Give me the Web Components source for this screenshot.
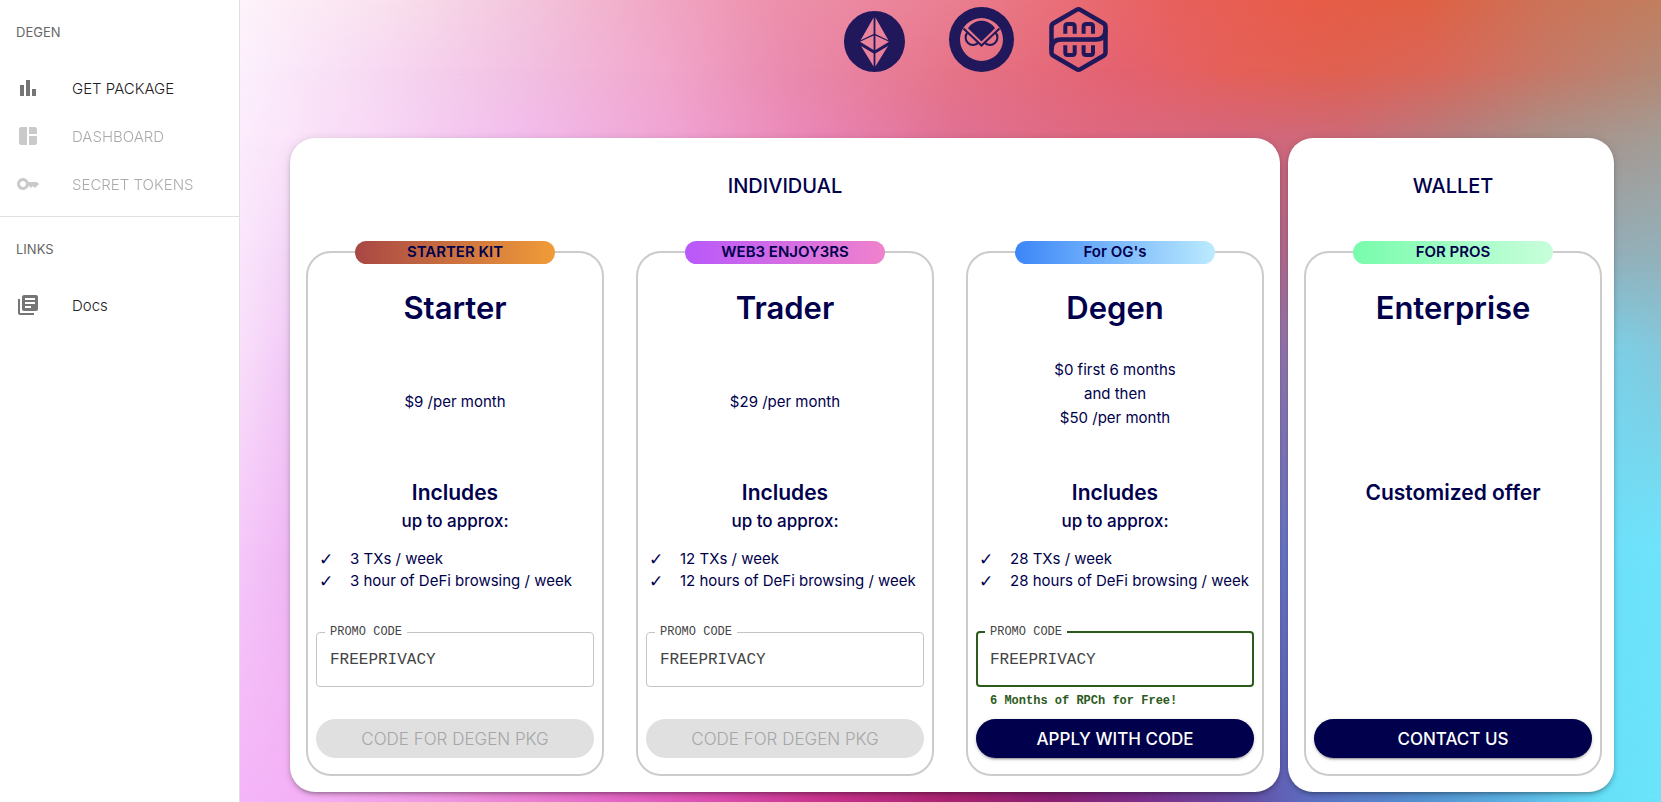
<!DOCTYPE html>
<html lang="en">
<head>
<meta charset="utf-8">
<title>Degen packages</title>
<style>
  html, body { margin: 0; }
  body {
    --navy: #00004c;
    font-family: Inter, "Open Sans", sans-serif;
    color: var(--navy);
    background: #fff;
  }
</style>
</head>
<body>
<degen-app></degen-app>

<script>
const define = (name, html, setup) => {
  const template = document.createElement('template');
  template.innerHTML = html;
  customElements.define(name, class extends HTMLElement {
    connectedCallback() {
      if (this.shadowRoot) return;
      const root = this.attachShadow({ mode: 'open' });
      root.append(template.content.cloneNode(true));
      if (setup) setup(root, this);
    }
  });
};

const ICONS = {
  bars: 'M4 9h4v11H4zm12 4h4v7h-4zm-6-9h4v16h-4z',
  dashboard: 'M11 21H5c-1.1 0-2-.9-2-2V5c0-1.1.9-2 2-2h6v18zm2 0h6c1.1 0 2-.9 2-2v-7h-8v9zm8-11V5c0-1.1-.9-2-2-2h-6v7h8z',
  key: 'M21 10h-8.350C11.830 7.670 9.610 6 7 6c-3.310 0-6 2.690-6 6s2.690 6 6 6c2.610 0 4.830-1.670 5.650-4H13l2 2 2-2 2 2 4-4.040L21 10zM7 15c-1.650 0-3-1.350-3-3s1.350-3 3-3 3 1.350 3 3-1.350 3-3 3z',
  docs: 'M4 6H2v14c0 1.100.9 2 2 2h14v-2H4V6zm16-4H8c-1.100 0-2 .9-2 2v12c0 1.100.9 2 2 2h12c1.100 0 2-.9 2-2V4c0-1.100-.9-2-2-2zm-1 9H9V9h10v2zm-4 4H9v-2h6v2zm4-8H9V5h10v2z'
};

/* Colour mesh: each row is a horizontal ramp, rows fade into one another vertically. */
const MESH = [
  [0, '#fef3fb 0%,#fae2ef 10%,#f3c6dd 20%,#f1a6c3 30%,#ed90ac 38%,#ea7f92 50%,#e96a70 60%,#e8605c 66%,#e85c48 75%,#e06044 83%,#cc7358 92%,#c27e5e'],
  [70, '#fcf0fd 0%,#f7d8f2 10%,#f2c0e2 20%,#f1a6cb 30%,#ea8cb0 38%,#e67488 50%,#e46270 62%,#e56058 70%,#e06050 77%,#da6658 84%,#c67866 92%,#b48874'],
  [138, '#fcecfc 0%,#f7d6f5 10%,#f2bcec 20%,#f0a4d4 30%,#ea86b6 40%,#e07094 50%,#de6880 60%,#d4667c 70%,#cc6a78 78%,#b47e7e 86%,#a89088 92%,#a49c96'],
  [250, '#fae6fc 0%,#f3d4f7 4%,#e9a0d4 30%,#c07090 70%,#b46c90 74%,#94aeb8 97%,#94b0b8'],
  [350, '#f9dffa 0%,#f3cdf7 3%,#d080c0 40%,#9478b0 74%,#7ccfe6 97%,#84c8dc'],
  [550, '#f5c8f9 0%,#f0baf5 3%,#d060b0 40%,#6a78c8 74%,#6ee0fa 97%,#6ee4fc'],
  [802, '#f4b4f8 0%,#f4b0f4 5%,#ee94de 15%,#e56cc8 25%,#d84cac 34%,#c8328c 41%,#a8226e 50%,#8a1e70 57%,#7c2c88 63%,#6848a0 70%,#5c6cc0 75%,#5490d0 83%,#5cb4e4 90%,#66e0f8 96%,#6ae4fa']
];
define('mesh-backdrop', `
  <style>
    :host { display: block; position: absolute; inset: 0; overflow: hidden; }
    div { position: absolute; inset: 0; }
  </style>`, root => {
  const pct = y => (y / 802 * 100).toFixed(1) + '%';
  MESH.forEach(([y, stops], i) => {
    const row = document.createElement('div');
    row.style.background = `linear-gradient(to right, ${stops} 100%)`;
    if (i) row.style.maskImage = `linear-gradient(to bottom, transparent ${pct(MESH[i - 1][0])}, #000 ${pct(y)})`;
    root.append(row);
  });
});

define('nav-item', `
  <style>
    :host { display: block; }
    a { display: flex; align-items: center; gap: 32px; height: 48px; padding: 0 16px; color: #212121; text-decoration: none; font-size: 15px; font-weight: 300; }
    svg { width: 24px; height: 24px; fill: #757575; flex: none; }
    :host([disabled]) a { opacity: .38; pointer-events: none; }
  </style>
  <a href="#"><svg viewBox="0 0 24 24" aria-hidden="true"><path/></svg><span><slot></slot></span></a>`,
(root, host) => {
  root.querySelector('path').setAttribute('d', ICONS[host.getAttribute('icon')]);
  if (host.hasAttribute('disabled')) root.querySelector('a').setAttribute('aria-disabled', 'true');
});

define('nav-section', `
  <style>
    :host { display: block; padding: 8px 0; }
    h2 { margin: 0 0 8px; padding: 0 16px; font-size: 13px; line-height: 48px; font-weight: 400; color: #666; }
  </style>
  <h2></h2><slot></slot>`,
(root, host) => { root.querySelector('h2').textContent = host.getAttribute('label'); });

define('side-nav', `
  <style>
    :host { display: block; background: #fff; border-right: 1px solid #e0e0e0; }
    hr { margin: 0; border: 0; border-top: 1px solid #e0e0e0; }
  </style>
  <nav>
    <nav-section label="DEGEN">
      <nav-item icon="bars">GET PACKAGE</nav-item>
      <nav-item icon="dashboard" disabled>DASHBOARD</nav-item>
      <nav-item icon="key" disabled>SECRET TOKENS</nav-item>
    </nav-section>
    <hr>
    <nav-section label="LINKS"><nav-item icon="docs">Docs</nav-item></nav-section>
  </nav>`);

define('chain-logos', `
  <style>
    :host { display: flex; justify-content: center; gap: 35px; padding: 7px 0 66px 48px; color: #20185a; }
    svg { height: 65px; fill: currentColor; }
  </style>
  <svg width="70" viewBox="0 0 70 65" role="img" aria-label="Ethereum">
    <path fill-rule="evenodd" d="M30.500 4a30.500 30.500 0 1 1 0 61 30.500 30.500 0 1 1 0-61z
      M29.600 10.500V27L16.600 33.200z M31.400 10.500V27L44.400 33.200z
      M29.600 28.600V43L16 34.800z M31.400 28.600V43L45 34.800z
      M29.600 46.600V59.500L17 39z M31.400 46.600V59.500L44 39z"/>
  </svg>
  <svg width="65" viewBox="0 0 65 65" role="img" aria-label="Gnosis">
    <path fill-rule="evenodd" d="M32.500 0a32.500 32.500 0 1 1 0 65 32.500 32.500 0 1 1 0-65z M32.500 11a21.500 21.500 0 1 0 0 43 21.500 21.500 0 1 0 0-43z"/>
    <path d="M19 21.200C25.500 11.200 39.500 11.200 46 21.200L32.500 34.500z"/>
    <g fill="none" stroke="currentColor" stroke-width="2">
      <path d="M14.500 21.500L32.500 38.500L50.500 21.500"/>
      <path d="M18.500 25.500A6.300 6.300 0 1 0 29.500 35.500"/>
      <path d="M46.500 25.500A6.300 6.300 0 1 1 35.500 35.500"/>
    </g>
  </svg>
  <svg width="59" viewBox="0 0 59 65" role="img" aria-label="Hexagonal chain">
    <g fill="none" stroke="currentColor" stroke-width="4.500" stroke-linejoin="round">
      <path d="M27.500 2.900Q29.500 1.800 31.500 2.900L54.500 16.300Q56.500 17.500 56.500 19.800V45.200Q56.500 47.500 54.500 48.700L31.500 62.100Q29.500 63.200 27.500 62.100L4.500 48.700Q2.500 47.500 2.500 45.200V19.800Q2.500 17.500 4.500 16.300z"/>
      <path d="M2.500 42.500Q2.500 32.500 12 32.500H47Q56.500 32.500 56.500 22.500"/>
      <g stroke-width="4">
        <path d="M16.300 26.700V19.500Q16.300 17 18.800 17H23.200Q25.700 17 25.700 19.500V26.700"/>
        <path d="M34.600 26.700V19.500Q34.600 17 37.100 17H41.500Q44 17 44 19.500V26.700"/>
        <path d="M16.300 38.300V45.500Q16.300 48 18.800 48H23.200Q25.700 48 25.700 45.500V38.300"/>
        <path d="M34.600 38.300V45.500Q34.600 48 37.100 48H41.500Q44 48 44 45.500V38.300"/>
      </g>
    </g>
  </svg>`);

define('promo-field', `
  <style>
    :host { display: block; text-align: left; font-family: "Liberation Mono", monospace; }
    fieldset { margin: 0; min-width: 0; padding: 0 8px 6px; border: 1px solid #c4c4c4; border-radius: 4px; }
    legend { padding: 0 5px; font-size: 12px; line-height: 16px; color: #444; }
    input { display: block; box-sizing: border-box; width: 100%; height: 40px; padding: 0 5px; border: 0; outline: 0; background: none; font: 16px "Liberation Mono", monospace; color: #444; }
    p { margin: 0; padding: 0 14px; height: 32px; font-size: 12px; line-height: 28px; font-weight: 700; color: #2b5a1c; }
    :host([message]) fieldset { border: 2px solid #2b5a1c; padding: 0 7px 5px; }
  </style>
  <fieldset>
    <legend><label for="code">PROMO CODE</label></legend>
    <input id="code" type="text" value="FREEPRIVACY">
  </fieldset>
  <p></p>`,
(root, host) => { root.querySelector('p').textContent = host.getAttribute('message') || ''; });

define('pill-button', `
  <style>
    :host { display: block; }
    button { display: block; width: 100%; height: 39px; padding: 0; border: 0; border-radius: 20px; font: 500 17px Inter, sans-serif; color: #fff; background: var(--navy); box-shadow: 0 3px 1px -2px rgba(0,0,0,.2), 0 2px 2px rgba(0,0,0,.14), 0 1px 5px rgba(0,0,0,.12); }
    button:disabled { font-weight: 300; color: #a6a6a6; background: #e0e0e0; box-shadow: none; }
  </style>
  <button type="button"><slot></slot></button>`,
(root, host) => { root.querySelector('button').disabled = host.hasAttribute('disabled'); });

define('plan-card', `
  <style>
    :host { position: relative; display: flex; flex-direction: column; box-sizing: border-box; min-width: 0; padding: 35px 8px 16px; border: 2px solid #ccc; border-radius: 25px; text-align: center; }
    .badge { position: absolute; top: -12px; left: 50%; margin-left: -100px; width: 200px; height: 23px; border-radius: 12px; font-size: 15px; line-height: 22px; font-weight: 600; background: linear-gradient(to right, var(--from), var(--to)); }
    h3 { margin: 0; font-size: 31px; line-height: 40px; font-weight: 600; }
    .price { display: flex; flex-direction: column; justify-content: center; height: 132px; font-size: 15px; line-height: 24px; }
    .footer { margin-top: auto; }
  </style>
  <div class="badge"></div>
  <h3></h3>
  <div class="price"><slot name="price"></slot></div>
  <slot></slot>
  <div class="footer"><slot name="action"></slot></div>`,
(root, host) => {
  const badge = root.querySelector('.badge');
  badge.textContent = host.getAttribute('badge');
  badge.style.setProperty('--from', host.getAttribute('from'));
  badge.style.setProperty('--to', host.getAttribute('to'));
  root.querySelector('h3').textContent = host.getAttribute('name');
});

define('plan-includes', `
  <style>
    :host { display: block; margin-top: 19px; }
    h4 { margin: 0; font-size: 21px; line-height: 28px; font-weight: 600; }
    p { margin: 0; font-size: 17px; line-height: 28px; font-weight: 500; }
    ul { margin: 13px 0 32px; padding: 0 0 0 3px; list-style: none; text-align: left; font-size: 15px; line-height: 22px; }
    li { display: grid; grid-template-columns: 31px 1fr; height: 22px; white-space: nowrap; }
    .tick { font-family: "DejaVu Sans", sans-serif; font-size: 17px; }
  </style>
  <h4></h4>`,
(root, host) => {
  root.querySelector('h4').textContent = host.getAttribute('heading');
  if (!host.hasAttribute('features')) return;
  const note = document.createElement('p');
  note.textContent = 'up to approx:';
  const list = document.createElement('ul');
  for (const text of host.getAttribute('features').split('|')) {
    const li = document.createElement('li');
    li.innerHTML = '<span class="tick">✓</span><span></span>';
    li.lastChild.textContent = text;
    list.append(li);
  }
  root.append(note, list);
});

define('plan-panel', `
  <style>
    :host { display: flex; flex-direction: column; min-width: 0; box-sizing: border-box; padding: 32px var(--end, 16px) 16px 16px; background: #fff; border-radius: 25px; box-shadow: 0 3px 3px -2px rgba(0,0,0,.2), 0 3px 4px rgba(0,0,0,.14), 0 1px 8px rgba(0,0,0,.12); }
    h2 { margin: 0 0 49px; text-align: center; font-size: 20px; line-height: 32px; font-weight: 500; }
    .cards { flex: 1; display: grid; grid-auto-flow: column; grid-auto-columns: minmax(0, 1fr); gap: 32px; }
  </style>
  <h2></h2><div class="cards"><slot></slot></div>`,
(root, host) => { root.querySelector('h2').textContent = host.getAttribute('heading'); });

define('degen-app', `
  <style>
    :host { display: grid; grid-template-columns: 240px minmax(0, 1fr); min-height: 100vh; }
    main { position: relative; padding: 0 47px 8px 50px; }
    .content { position: relative; }
    .panels { display: grid; grid-template-columns: 990fr 326fr; gap: 8px; }
    .wallet { --end: 12px; }
    .single { margin-top: 16px; }
  </style>
  <side-nav></side-nav>
  <main>
    <mesh-backdrop></mesh-backdrop>
    <div class="content">
      <chain-logos></chain-logos>
      <div class="panels">
        <plan-panel heading="INDIVIDUAL">
          <plan-card badge="STARTER KIT" name="Starter" from="#a84745" to="#f09c38">
            <div slot="price" class="single">$9 /per month</div>
            <plan-includes heading="Includes" features="3 TXs / week|3 hour of DeFi browsing / week"></plan-includes>
            <promo-field></promo-field>
            <pill-button slot="action" disabled>CODE FOR DEGEN PKG</pill-button>
          </plan-card>
          <plan-card badge="WEB3 ENJOY3RS" name="Trader" from="#b858fa" to="#f082cc">
            <div slot="price" class="single">$29 /per month</div>
            <plan-includes heading="Includes" features="12 TXs / week|12 hours of DeFi browsing / week"></plan-includes>
            <promo-field></promo-field>
            <pill-button slot="action" disabled>CODE FOR DEGEN PKG</pill-button>
          </plan-card>
          <plan-card badge="For OG's" name="Degen" from="#3b86f8" to="#bbebff">
            <div slot="price">$0 first 6 months<br>and then<br>$50 /per month</div>
            <plan-includes heading="Includes" features="28 TXs / week|28 hours of DeFi browsing / week"></plan-includes>
            <promo-field message="6 Months of RPCh for Free!"></promo-field>
            <pill-button slot="action">APPLY WITH CODE</pill-button>
          </plan-card>
        </plan-panel>
        <plan-panel class="wallet" heading="WALLET">
          <plan-card badge="FOR PROS" name="Enterprise" from="#78fcac" to="#c8fedb">
            <plan-includes heading="Customized offer"></plan-includes>
            <pill-button slot="action">CONTACT US</pill-button>
          </plan-card>
        </plan-panel>
      </div>
    </div>
  </main>`);
</script>
</body>
</html>
